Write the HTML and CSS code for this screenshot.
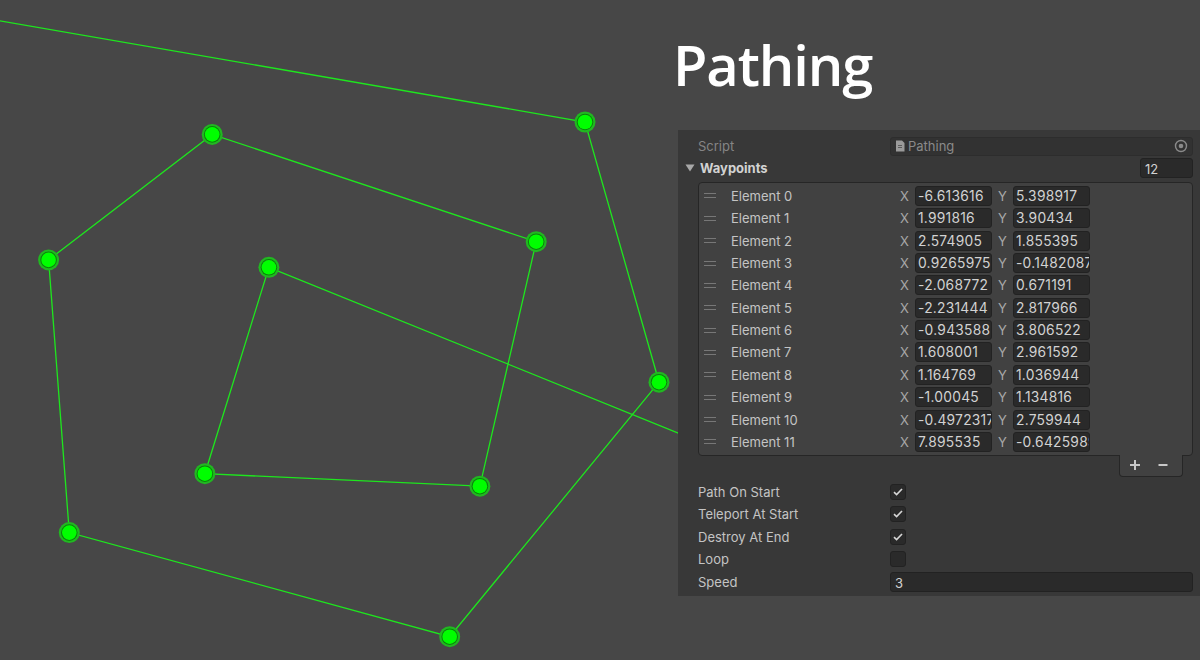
FILE: index.html
```html
<!DOCTYPE html>
<html>
<head>
<meta charset="utf-8">
<link rel="stylesheet" href="styles.css">
</head>
<body>
<div class="stage">
  <svg class="scene" viewBox="0 0 1200 660" width="1200" height="660">
    <polyline class="path" points="-508,-67 585,122 659.05,382.2 449.7,636.7 69.3,532.6 48.6,259.9 212.2,134.4 536.2,241.7 479.9,486.2 204.9,473.7 268.9,267.3 690,437.8"/>
    <g class="node"><circle cx="585" cy="122" r="10.5" class="o"/><circle cx="585" cy="122" r="8.3" class="m"/><circle cx="585" cy="122" r="7.3" class="i"/></g>
    <g class="node"><circle cx="659" cy="382.2" r="10.5" class="o"/><circle cx="659" cy="382.2" r="8.3" class="m"/><circle cx="659" cy="382.2" r="7.3" class="i"/></g>
    <g class="node"><circle cx="449.7" cy="636.7" r="10.5" class="o"/><circle cx="449.7" cy="636.7" r="8.3" class="m"/><circle cx="449.7" cy="636.7" r="7.3" class="i"/></g>
    <g class="node"><circle cx="69.3" cy="532.6" r="10.5" class="o"/><circle cx="69.3" cy="532.6" r="8.3" class="m"/><circle cx="69.3" cy="532.6" r="7.3" class="i"/></g>
    <g class="node"><circle cx="48.6" cy="259.9" r="10.5" class="o"/><circle cx="48.6" cy="259.9" r="8.3" class="m"/><circle cx="48.6" cy="259.9" r="7.3" class="i"/></g>
    <g class="node"><circle cx="212.2" cy="134.4" r="10.5" class="o"/><circle cx="212.2" cy="134.4" r="8.3" class="m"/><circle cx="212.2" cy="134.4" r="7.3" class="i"/></g>
    <g class="node"><circle cx="536.2" cy="241.7" r="10.5" class="o"/><circle cx="536.2" cy="241.7" r="8.3" class="m"/><circle cx="536.2" cy="241.7" r="7.3" class="i"/></g>
    <g class="node"><circle cx="479.9" cy="486.2" r="10.5" class="o"/><circle cx="479.9" cy="486.2" r="8.3" class="m"/><circle cx="479.9" cy="486.2" r="7.3" class="i"/></g>
    <g class="node"><circle cx="204.9" cy="473.7" r="10.5" class="o"/><circle cx="204.9" cy="473.7" r="8.3" class="m"/><circle cx="204.9" cy="473.7" r="7.3" class="i"/></g>
    <g class="node"><circle cx="268.9" cy="267.3" r="10.5" class="o"/><circle cx="268.9" cy="267.3" r="8.3" class="m"/><circle cx="268.9" cy="267.3" r="7.3" class="i"/></g>
  </svg>

  <div class="side">
    <h1 class="title">Pathing</h1>
    <div class="inspector">
      <div class="row dim">
        <div class="label">Script</div>
        <div class="objfield">
          <svg class="scripticon" viewBox="0 0 10 12" width="10" height="12"><path d="M1 0.5h6l2.5 2.5v8.5h-8.5z" fill="#9a9a9a"/><rect x="3" y="5" width="4" height="1" fill="#5a5a5a"/><rect x="3" y="7" width="4" height="1" fill="#5a5a5a"/></svg>
          <span class="objname">Pathing</span>
          <svg class="target" viewBox="0 0 14 14" width="14" height="14"><circle cx="7" cy="7" r="5.5" fill="none" stroke="#8a8a8a" stroke-width="1.4"/><circle cx="7" cy="7" r="2.3" fill="#8a8a8a"/></svg>
        </div>
      </div>
      <div class="row foldrow">
        <svg class="fold" viewBox="0 0 10 8" width="10" height="8"><path d="M0.5 0.5h9l-4.5 7z" fill="#a8a8a8"/></svg>
        <div class="label bold">Waypoints</div>
        <div class="count">12</div>
      </div>

      <div class="list">
        <div class="el"><span class="handle"></span><span class="elname">Element 0</span><span class="ax">X</span><span class="num">-6.613616</span><span class="ax">Y</span><span class="num">5.398917</span></div>
        <div class="el"><span class="handle"></span><span class="elname">Element 1</span><span class="ax">X</span><span class="num">1.991816</span><span class="ax">Y</span><span class="num">3.90434</span></div>
        <div class="el"><span class="handle"></span><span class="elname">Element 2</span><span class="ax">X</span><span class="num">2.574905</span><span class="ax">Y</span><span class="num">1.855395</span></div>
        <div class="el"><span class="handle"></span><span class="elname">Element 3</span><span class="ax">X</span><span class="num">0.9265975</span><span class="ax">Y</span><span class="num">-0.1482087</span></div>
        <div class="el"><span class="handle"></span><span class="elname">Element 4</span><span class="ax">X</span><span class="num">-2.068772</span><span class="ax">Y</span><span class="num">0.671191</span></div>
        <div class="el"><span class="handle"></span><span class="elname">Element 5</span><span class="ax">X</span><span class="num">-2.231444</span><span class="ax">Y</span><span class="num">2.817966</span></div>
        <div class="el"><span class="handle"></span><span class="elname">Element 6</span><span class="ax">X</span><span class="num">-0.943588</span><span class="ax">Y</span><span class="num">3.806522</span></div>
        <div class="el"><span class="handle"></span><span class="elname">Element 7</span><span class="ax">X</span><span class="num">1.608001</span><span class="ax">Y</span><span class="num">2.961592</span></div>
        <div class="el"><span class="handle"></span><span class="elname">Element 8</span><span class="ax">X</span><span class="num">1.164769</span><span class="ax">Y</span><span class="num">1.036944</span></div>
        <div class="el"><span class="handle"></span><span class="elname">Element 9</span><span class="ax">X</span><span class="num">-1.00045</span><span class="ax">Y</span><span class="num">1.134816</span></div>
        <div class="el"><span class="handle"></span><span class="elname">Element 10</span><span class="ax">X</span><span class="num">-0.4972317</span><span class="ax">Y</span><span class="num">2.759944</span></div>
        <div class="el"><span class="handle"></span><span class="elname">Element 11</span><span class="ax">X</span><span class="num">7.895535</span><span class="ax">Y</span><span class="num">-0.6425989</span></div>
      </div>
      <div class="footer-wrap">
        <div class="listfooter">
          <svg viewBox="0 0 12 12" width="12" height="12"><path d="M6 1v10M1 6h10" stroke="#c8c8c8" stroke-width="2"/></svg>
          <svg viewBox="0 0 12 12" width="12" height="12"><path d="M1.5 6h9" stroke="#c8c8c8" stroke-width="2"/></svg>
        </div>
      </div>

      <div class="row"><div class="label">Path On Start</div><span class="check on"><svg viewBox="0 0 10 8" width="10" height="8"><path d="M1 4.2l2.6 2.4L9 1" fill="none" stroke="#d6d6d6" stroke-width="1.6"/></svg></span></div>
      <div class="row"><div class="label">Teleport At Start</div><span class="check on"><svg viewBox="0 0 10 8" width="10" height="8"><path d="M1 4.2l2.6 2.4L9 1" fill="none" stroke="#d6d6d6" stroke-width="1.6"/></svg></span></div>
      <div class="row"><div class="label">Destroy At End</div><span class="check on"><svg viewBox="0 0 10 8" width="10" height="8"><path d="M1 4.2l2.6 2.4L9 1" fill="none" stroke="#d6d6d6" stroke-width="1.6"/></svg></span></div>
      <div class="row"><div class="label">Loop</div><span class="check"></span></div>
      <div class="row"><div class="label">Speed</div><div class="field wide">3</div></div>
    </div>
  </div>
</div>
</body>
</html>
```
FILE: styles.css
```css
* { box-sizing: border-box; }
html, body { margin: 0; padding: 0; background: #474747; }
body { font-family: Inter, "Noto Sans", sans-serif; font-size: 13px; color: #c4c4c4; }

.stage {
  position: relative;
  width: 1200px;
  height: 660px;
  overflow: hidden;
  background: #474747;
  display: flex;
  justify-content: flex-end;
}
.scene { position: absolute; left: 0; top: 0; }
.path { fill: none; stroke: #1ee61e; stroke-width: 1.3; }
.node .o { fill: #21b821; }
.node .m { fill: #0c820c; }
.node .i { fill: #00ff00; }

.side {
  position: relative;
  width: 522px;
  display: flex;
  flex-direction: column;
}
.title {
  margin: 0 0 0 -5px;
  height: 130px;
  padding-top: 36px;
  font-family: "Open Sans", sans-serif;
  font-weight: 600;
  font-size: 56px;
  line-height: 56px;
  letter-spacing: -1.1px;
  color: #ffffff;
}

.inspector {
  background: #383838;
  padding: 5px 7px 3px 20px;
  height: 466px;
}
.row {
  height: 22.4px;
  display: flex;
  align-items: center;
}
.label { width: 192px; flex: none; color: #c4c4c4; white-space: nowrap; }
.dim .label { color: #858585; }
.bold { font-weight: 700; color: #d2d2d2; }

.objfield {
  flex: 1;
  height: 19px;
  background: #323232;
  border: 1px solid #2d2d2d;
  border-radius: 3px;
  display: flex;
  align-items: center;
  padding: 0 4px 0 4px;
  color: #8a8a8a;
}
.scripticon { margin-right: 3px; }
.objname { flex: 1; }
.target { flex: none; }

.foldrow { margin-left: -13px; margin-top: -1px; }
.fold { margin-right: 5px; flex: none; }
.foldrow .label { width: 440px; }
.count {
  margin-left: auto;
  width: 53px;
  height: 20px;
  background: #2a2a2a;
  border: 1px solid #222;
  border-radius: 3px;
  padding: 2px 4px 0;
  color: #d2d2d2;
}

.list {
  margin-top: 3px;
  background: #414141;
  border: 1px solid #262626;
  border-radius: 4px;
  padding: 2px 0 2px 5px;
  height: 274px;
}
.el {
  height: 22.36px;
  display: flex;
  align-items: center;
}
.handle {
  width: 12px;
  height: 5px;
  border-top: 1px solid #777;
  border-bottom: 1px solid #777;
  margin-right: 15px;
  flex: none;
}
.elname { width: 168px; flex: none; color: #c4c4c4; }
.ax { width: 16px; flex: none; color: #a8a8a8; padding-left: 1px; }
.num {
  width: 77px;
  height: 20px;
  flex: none;
  background: #2a2a2a;
  border: 1px solid #222;
  border-radius: 3px;
  padding: 1px 2px 0;
  font-size: 13.8px;
  letter-spacing: 0.25px;
  color: #d2d2d2;
  overflow: hidden;
  white-space: nowrap;
  margin-right: 5px;
}

.footer-wrap {
  display: flex;
  justify-content: flex-end;
  padding-right: 10px;
  margin-top: -1px;
  margin-bottom: 4px;
}
.listfooter {
  width: 64px;
  height: 22px;
  background: #414141;
  border: 1px solid #262626;
  border-top: none;
  border-radius: 0 0 4px 4px;
  display: flex;
  align-items: center;
  justify-content: center;
  gap: 16px;
  padding-bottom: 1px;
  padding-right: 4px;
}

.check {
  width: 16px;
  height: 16px;
  background: #2a2a2a;
  border: 1px solid #222;
  border-radius: 3px;
  display: flex;
  align-items: center;
  justify-content: center;
}
.field.wide {
  flex: 1;
  height: 20px;
  background: #2a2a2a;
  border: 1px solid #222;
  border-radius: 3px;
  padding: 2px 4px 0;
  color: #d2d2d2;
}
```
